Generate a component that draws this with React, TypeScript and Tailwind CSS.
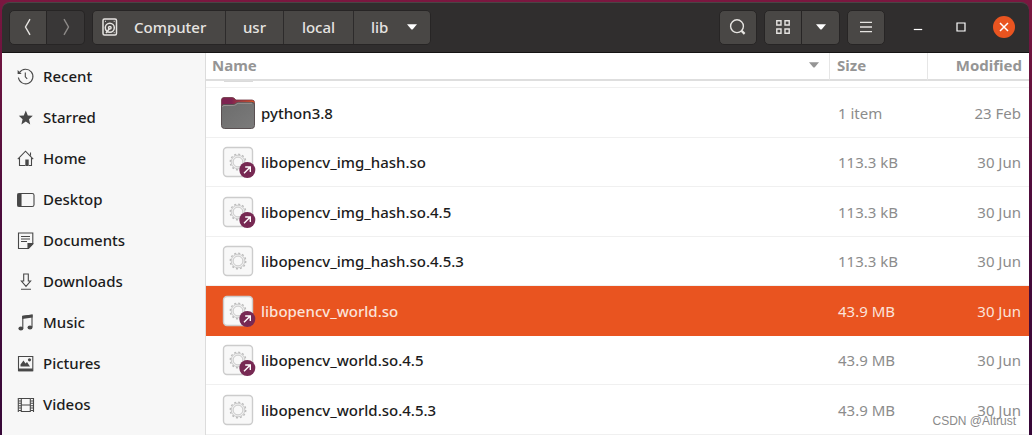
import React, { useState } from 'react';

interface FileEntry {
  name: string;
  kind: 'folder' | 'library';
  link?: boolean;
  size: string;
  modified: string;
}

interface Place {
  label: string;
  icon: React.ReactNode;
}

const files: FileEntry[] = [
  { name: 'python3.8', kind: 'folder', size: '1 item', modified: '23 Feb' },
  { name: 'libopencv_img_hash.so', kind: 'library', link: true, size: '113.3 kB', modified: '30 Jun' },
  { name: 'libopencv_img_hash.so.4.5', kind: 'library', link: true, size: '113.3 kB', modified: '30 Jun' },
  { name: 'libopencv_img_hash.so.4.5.3', kind: 'library', size: '113.3 kB', modified: '30 Jun' },
  { name: 'libopencv_world.so', kind: 'library', link: true, size: '43.9 MB', modified: '30 Jun' },
  { name: 'libopencv_world.so.4.5', kind: 'library', link: true, size: '43.9 MB', modified: '30 Jun' },
  { name: 'libopencv_world.so.4.5.3', kind: 'library', size: '43.9 MB', modified: '30 Jun' },
];

const places: Place[] = [
  {
    label: 'Recent',
    icon: (
      <>
        <path d="M2.6 4.4A7.3 7.3 0 1 1 1.4 9.5" />
        <path d="M8.3 4.5V8.8L10.2 10.8" />
        <path d="M.6 2V6H4.6Z" fill="currentColor" stroke="none" />
      </>
    ),
  },
  {
    label: 'Starred',
    icon: <path d="M8.8 1.5L10.8 6.4L15.8 6.8L12 10.2L13.2 15.4L8.8 12.6L4.4 15.4L5.6 10.2L1.8 6.8L6.8 6.4Z" fill="currentColor" stroke="none" />,
  },
  {
    label: 'Home',
    icon: (
      <>
        <path d="M.8 9.2L8.5 1.2L16.2 9.2M2.5 8V15.5H8M14.5 8V15.5H12M13.5 2.5V5.5" />
        <path d="M8.3 9.5H11.7V16H8.3Z" fill="currentColor" stroke="none" />
      </>
    ),
  },
  {
    label: 'Desktop',
    icon: (
      <>
        <rect x=".6" y="2.5" width="16.4" height="13" rx="1.8" />
        <path d="M1 3H4V15H1Z" fill="currentColor" />
      </>
    ),
  },
  {
    label: 'Documents',
    icon: (
      <>
        <path d="M1.5 1H15.8V12L11.5 16.5H1.5Z" />
        <path d="M4 4.5H13M4 7H13M4 9.5H10" />
        <path d="M15.5 11.5H11V16Z" fill="currentColor" />
      </>
    ),
  },
  {
    label: 'Downloads',
    icon: <path d="M6.7 1H11.3V8H13.6L9 13.3L4.4 8H6.7ZM4 16.3H14" />,
  },
  {
    label: 'Music',
    icon: (
      <>
        <path d="M5.8 14V2.3L15 1.2V13" />
        <path d="M5.2 1.9L15.6 .6V3.6L5.2 4.9Z" fill="currentColor" stroke="none" />
        <ellipse cx="3.9" cy="14.6" rx="2.5" ry="2" fill="currentColor" stroke="none" />
        <ellipse cx="13" cy="13.4" rx="2.5" ry="2" fill="currentColor" stroke="none" />
      </>
    ),
  },
  {
    label: 'Pictures',
    icon: (
      <>
        <path d="M1.5 1.5H15.8V15.8H1.5Z" />
        <path d="M3.5 11.5V9.5L6.5 5.5L8.5 8.5L10 7L13 11.5ZM1.5 13.5H15.8V16.3H1.5Z" fill="currentColor" stroke="none" />
        <circle cx="12.5" cy="4.8" r="1.6" fill="currentColor" stroke="none" />
      </>
    ),
  },
  {
    label: 'Videos',
    icon: (
      <>
        <path d="M4.3 2.5H13.3V15.5H4.3ZM4.3 9H13.3M1.3 2V16M16.5 2V16" />
        <path d="M2.8 2V16M14.9 2V16" strokeWidth="2.6" strokeDasharray="1 1.4" />
      </>
    ),
  },
];

const crumbs = ['Computer', 'usr', 'local', 'lib'];

const DownArrow: React.FC<{ className?: string }> = ({ className }) => (
  <svg className={className} width="10" height="6" viewBox="0 0 10 6" fill="currentColor" aria-hidden="true">
    <path d="M0 .3H10L5.8 5.2Q5 6 4.2 5.2Z" />
  </svg>
);

const FolderIcon = () => (
  <svg width="36" height="34" viewBox="0 0 36 34" aria-hidden="true">
    <defs>
      <linearGradient id="folder-back" x1="0" x2="1">
        <stop offset="0.3" stopColor="#7d2350" />
        <stop offset="0.6" stopColor="#b33c3d" />
        <stop offset="1" stopColor="#e95420" />
      </linearGradient>
      <linearGradient id="folder-front" x1="0" y1="0" x2="1" y2="1">
        <stop offset="0" stopColor="#6c6c6c" />
        <stop offset="1" stopColor="#7b7b7b" />
      </linearGradient>
    </defs>
    <path d="M1.5 4Q1.5 1.5 4 1.5H12Q14 1.5 15 3L15.8 4H32Q34.5 4 34.5 6.5V20H1.5Z" fill="url(#folder-back)" stroke="#6b3440" strokeWidth=".8" />
    <path d="M1.5 11Q1.5 8.5 4 8.5H13Q14.5 8.5 15.6 7.6L16.4 7Q17.3 6.3 18.5 6.3H32Q34.5 6.3 34.5 9V29.5Q34.5 32.5 31.5 32.5H4.5Q1.5 32.5 1.5 29.5Z" fill="url(#folder-front)" stroke="#595052" />
    <path d="M2.5 11Q2.5 9.5 4 9.5H13.2Q14.8 9.5 16 8.5Q17.2 7.3 18.5 7.3H32" fill="none" stroke="#aaa0a0" strokeWidth=".7" />
  </svg>
);

const LibraryIcon: React.FC<{ link?: boolean }> = ({ link }) => (
  <svg width="36" height="34" viewBox="0 0 36 34" aria-hidden="true">
    <rect x="3.5" y="2.5" width="29" height="29" rx="3.5" fill="#f8f8f8" stroke="#cccccc" strokeWidth="1.4" />
    <circle cx="18" cy="17" r="7.7" fill="none" stroke="#bcbcbc" strokeWidth="1.5" strokeDasharray="2 2.03" />
    <circle cx="18" cy="17" r="6.8" fill="#efefef" stroke="#c4c4c4" strokeWidth=".8" />
    <circle cx="18" cy="17" r="4.9" fill="#f8f8f8" stroke="#c2c2c2" strokeWidth=".9" />
    {link && (
      <>
        <circle cx="27.3" cy="25" r="8" fill="#772953" />
        <path d="M24 28.3L30 22.3M25.2 22H30.3V27.1" fill="none" stroke="#fff" strokeWidth="1.4" />
      </>
    )}
  </svg>
);

const barButton = 'flex h-[35px] items-center justify-center border border-[#272525] bg-[#494745] text-[#e6e4e1]';

export default function App() {
  const [selected, setSelected] = useState('libopencv_world.so');

  return (
    <div className="relative min-h-screen bg-linear-to-b from-[#7b1740] via-[#4b0b3c] to-[#370838] pt-[2px] pr-[3px] pl-[2px] font-['Noto_Sans','Open_Sans',sans-serif] text-[15px] leading-5 text-[#1c1c1c]">
      <header className="flex h-[51px] items-center rounded-t-lg border-t border-b border-t-[#484545] border-b-[#151414] bg-[#302e2e] pr-[14px] pb-px pl-[7px]">
        <nav className="flex items-center" aria-label="Location">
          <button type="button" aria-label="Back" className={`${barButton} w-[38px] rounded-l-[5px]`}>
            <svg width="16" height="18" viewBox="0 0 16 18" fill="none" stroke="currentColor" strokeWidth="1.4"><path d="M10 1.2L5.5 9L10 16.8" /></svg>
          </button>
          <button type="button" aria-label="Forward" className="flex h-[35px] w-[38px] items-center justify-center rounded-r-[5px] border border-l-0 border-[#272525] bg-[#393737] text-[#8d8a88]">
            <svg width="16" height="18" viewBox="0 0 16 18" fill="none" stroke="currentColor" strokeWidth="1.4"><path d="M6 1.2L10.5 9L6 16.8" /></svg>
          </button>

          <div className="ml-[7px] flex overflow-hidden rounded-[5px] border border-[#272525]">
            {crumbs.map((crumb, i) => (
              <button
                key={crumb}
                type="button"
                className={`flex h-[33px] items-center bg-[#494745] font-medium text-[#e6e4e1] ${i === 0 ? 'w-[132px] gap-4 pl-[9px]' : i === 1 ? 'w-[58px] justify-center border-l border-[#2d2b2b]' : i === 2 ? 'w-[70px] justify-center border-l border-[#2d2b2b]' : 'w-[77px] gap-[19px] border-l border-[#2d2b2b] pl-[17px]'}`}
              >
                {i === 0 && (
                  <svg width="16" height="18" viewBox="0 0 16 18" fill="none" stroke="currentColor" strokeWidth="1.5" aria-hidden="true">
                    <rect x="1" y="1" width="13.5" height="16" rx="1.5" />
                    <circle cx="7.8" cy="9.8" r="4.5" />
                    <circle cx="7.8" cy="9.8" r="1.3" />
                    <path d="M4 15L7.5 10.5" />
                    <path d="M3 3.3H4M11.7 3.3H12.7M11.7 14.7H12.7" strokeWidth="1" />
                  </svg>
                )}
                {crumb}
                {i === crumbs.length - 1 && <DownArrow className="text-white" />}
              </button>
            ))}
          </div>
        </nav>

        <div className="ml-auto flex items-center gap-[7px]">
          <button type="button" aria-label="Search" className={`${barButton} w-[38px] rounded-[5px]`}>
            <svg width="18" height="18" viewBox="0 0 18 18" fill="none" stroke="currentColor" strokeWidth="1.4">
              <circle cx="8" cy="8.2" r="6.4" />
              <path d="M12.6 12.9L15.6 15.9" strokeWidth="2.2" />
            </svg>
          </button>
          <div className="flex">
            <button type="button" aria-label="Grid view" className={`${barButton} w-[38px] rounded-l-[5px]`}>
              <svg width="14" height="14" viewBox="0 0 14 14" fill="none" stroke="currentColor" strokeWidth="1.4">
                <path d="M.8 .8H5V5H.8ZM9 .8H13.2V5H9ZM.8 9H5V13.2H.8ZM9 9H13.2V13.2H9Z" />
              </svg>
            </button>
            <button type="button" aria-label="View options" className={`${barButton} w-[38px] rounded-r-[5px] border-l-0`}>
              <DownArrow className="text-white" />
            </button>
          </div>
          <button type="button" aria-label="Menu" className={`${barButton} w-[38px] rounded-[5px]`}>
            <svg width="12" height="12" viewBox="0 0 12 12" stroke="currentColor" strokeWidth="1.3"><path d="M0 1.3H12M0 6H12M0 10.7H12" /></svg>
          </button>
        </div>

        <div className="ml-[22px] flex items-center gap-[21px] text-white">
          <button type="button" aria-label="Minimize" className="flex size-[22px] items-center justify-center">
            <svg width="10" height="10" viewBox="0 0 10 10" stroke="currentColor" strokeWidth="1.2"><path d="M.8 7.5H9.2" /></svg>
          </button>
          <button type="button" aria-label="Maximize" className="flex size-[22px] items-center justify-center">
            <svg width="10" height="10" viewBox="0 0 10 10" fill="none" stroke="currentColor" strokeWidth="1.2"><path d="M1 1H9V9H1Z" /></svg>
          </button>
          <button type="button" aria-label="Close" className="flex size-[22px] items-center justify-center rounded-full bg-[#e95420]">
            <svg width="10" height="10" viewBox="0 0 10 10" stroke="currentColor" strokeWidth="1.5"><path d="M1 1L9 9M9 1L1 9" /></svg>
          </button>
        </div>
      </header>

      <div className="flex bg-white">
        <aside className="w-[204px] shrink-0 border-r border-[#dcdcdc] bg-[#f7f7f7] pt-[2px]">
          <ul>
            {places.map(place => (
              <li key={place.label}>
                <a href="#" className="flex h-[41px] items-center gap-2 pl-[15px] font-medium">
                  <svg width="18" height="18" viewBox="0 -1 18 18" fill="none" stroke="currentColor" strokeWidth="1.1" className="overflow-visible text-[#484848]" aria-hidden="true">
                    {place.icon}
                  </svg>
                  {place.label}
                </a>
              </li>
            ))}
          </ul>
        </aside>

        <main className="min-w-0 flex-1">
          <table className="w-full table-fixed border-separate border-spacing-0 text-left">
            <thead className="text-[#959595]">
              <tr>
                <th className="h-7 border-r border-b-2 border-r-[#e6e6e6] border-b-[#dedede] p-0 pr-2.5 pb-0.5 pl-1.5 font-bold">
                  <button type="button" className="flex w-full items-center justify-between">
                    Name
                    <DownArrow />
                  </button>
                </th>
                <th className="w-[98px] border-r border-b-2 border-r-[#e6e6e6] border-b-[#dedede] p-0 pb-0.5 pl-[7px] font-bold">Size</th>
                <th className="w-[101px] border-b-2 border-[#dedede] p-0 pr-[7px] pb-0.5 text-right font-bold">Modified</th>
              </tr>
            </thead>
            {/* tail of the row that is scrolled under the header */}
            <tbody aria-hidden="true">
              <tr>
                <td colSpan={3} className="h-[7px] border-b border-[#f0f0f0] p-0 pl-[18px] align-top">
                  <div className="h-px w-[29px] bg-[#dadada]" />
                </td>
              </tr>
            </tbody>
            <tbody>
              {files.map(file => {
                const active = file.name === selected;
                const cell = active ? 'border-b border-[#e95420] p-0' : 'border-b border-[#f0f0f0] p-0';
                return (
                  <tr
                    key={file.name}
                    onClick={() => setSelected(file.name)}
                    className={`odd:h-[50px] even:h-[49px] ${active ? 'bg-[#e95420] text-[#fbe3da]' : ''}`}
                  >
                    <td className={cell}>
                      <div className="flex items-center gap-[5px] pl-[14px] font-medium">
                        {file.kind === 'folder' ? <FolderIcon /> : <LibraryIcon link={file.link} />}
                        {file.name}
                      </div>
                    </td>
                    <td className={`${cell} pl-2 ${active ? '' : 'text-[#8c8c8c]'}`}>{file.size}</td>
                    <td className={`${cell} pr-2 text-right ${active ? '' : 'text-[#8c8c8c]'}`}>{file.modified}</td>
                  </tr>
                );
              })}
            </tbody>
          </table>
        </main>
      </div>

      <span className="absolute right-4 bottom-1.5 font-['Liberation_Sans',sans-serif] text-xs leading-4 text-[#8a8a8a]">CSDN @Altrust</span>
    </div>
  );
}
